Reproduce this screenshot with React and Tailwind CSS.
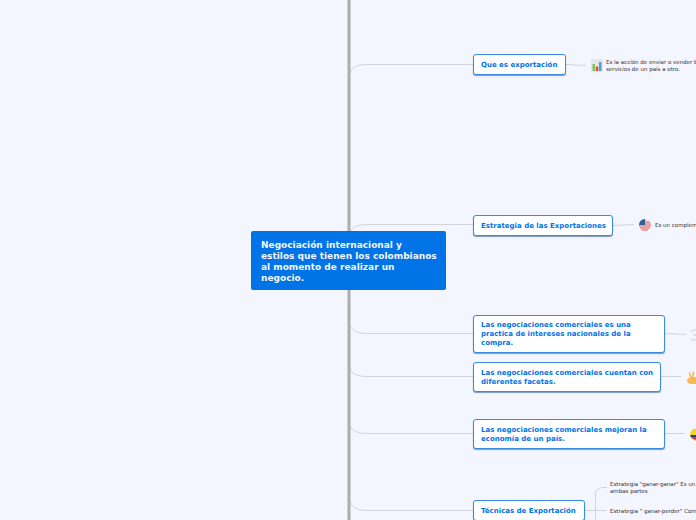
const nodes = [
  { pos: 'left-[473px] top-[54px] w-[93px] h-[21px]', text: 'Que es exportación' },
  { pos: 'left-[473px] top-[215px] w-[140px] h-[21px]', text: 'Estrategia de las Exportaciones' },
  { pos: 'left-[473px] top-[315px] w-[192px] h-[38px]', text: 'Las negociaciones comerciales es una practica de intereses nacionales de la compra.' },
  { pos: 'left-[473px] top-[362px] w-[188px] h-[30px]', text: 'Las negociaciones comerciales cuentan con diferentes facetas.' },
  { pos: 'left-[473px] top-[419px] w-[192px] h-[30px]', text: 'Las negociaciones comerciales mejoran la economía de un país.' },
  { pos: 'left-[473px] top-[500px] w-[112px] h-[21px]', text: 'Técnicas de Exportación' },
];

const notes = [
  { pos: 'left-[606px] top-[59px] w-[122px]', text: 'Es la acción de enviar o vender bienes y servicios de un país a otro.' },
  { pos: 'left-[655px] top-[222px] w-[120px]', text: 'Es un complemento' },
  { pos: 'left-[610px] top-[481px] w-[128px]', text: 'Estrategia "ganar-ganar" Es un acuerdo para ambas partes' },
  { pos: 'left-[610px] top-[508px] w-[128px]', text: 'Estrategia " ganar-perder" Como' },
];

const Connectors = () => (
  <svg className="absolute left-0 top-0" width="696" height="520" fill="none">
    {/* thin branches */}
    <g stroke="#d2d4da" strokeWidth="1">
      <path d="M350 74 Q351 64.5 367 64.5 H473" />
      <path d="M350 233 Q352 224.5 367 224.5 H473" />
      <path d="M350 325 Q352 333.5 367 333.5 H473" />
      <path d="M350 368 Q352 376.5 367 376.5 H473" />
      <path d="M350 425 Q352 433.5 367 433.5 H473" />
      <path d="M350 501 Q352 510.5 367 510.5 H473" />
      <path d="M566 64.5 L586 65.5" />
      <path d="M613 225.5 L634 224.5" />
      <path d="M665 333.5 L686 334.5" />
      <path d="M661 376.5 H681" />
      <path d="M665 433.5 H685" />
      <path d="M584 510.5 H606" />
      <path d="M595.5 520 V494 Q595.5 487.5 604 487.5 H607" />
    </g>
    {/* main trunk */}
    <path d="M349 0 V231 M349 290 V520" stroke="#adadad" strokeWidth="3" />
  </svg>
);

const BarsIcon = () => (
  <svg className="absolute left-[591px] top-[59px]" width="12" height="13" viewBox="0 0 12 13">
    <rect width="12" height="13" rx="1" fill="#e4e7ea" />
    <rect x="1.5" y="5" width="2.5" height="7" fill="#7cc25a" />
    <rect x="4.8" y="7.5" width="2.5" height="4.5" fill="#e8463c" />
    <rect x="8" y="3" width="2.5" height="9" fill="#4f9fd8" />
  </svg>
);

const UsFlag = () => (
  <svg className="absolute left-[639px] top-[219px]" width="12" height="12" viewBox="0 0 12 12">
    <circle cx="6" cy="6" r="6" fill="#f3dcdc" />
    <path d="M1 3h10M0 5h12M0 7h12M1 9h10M3 11h6" stroke="#df6b6f" strokeWidth="1" />
    <path d="M6 0A6 6 0 0 0 0 6H6Z" fill="#2f5f96" />
  </svg>
);

const Sketch = () => (
  <svg className="absolute left-[691px] top-[329px]" width="5" height="12" viewBox="0 0 5 12">
    <path d="M0 2L5 0.5M2 6H5M0 10L5 11.5" stroke="#dfe3e8" strokeWidth="2" />
  </svg>
);

const Hand = () => (
  <svg className="absolute left-[687px] top-[371px]" width="9" height="13" viewBox="0 0 9 13">
    <path d="M3 1L4.5 6L6 0.5L7.5 1L6.5 6L9 6V13H3Q0 12 0 8.5L1.5 7L3 7L1.8 1.5Z" fill="#f2bb58" />
  </svg>
);

const ColombiaFlag = () => (
  <svg className="absolute left-[690px] top-[428px]" width="12" height="13" viewBox="0 0 12 13">
    <circle cx="6" cy="6.5" r="6" fill="#f5d327" />
    <path d="M0.5 7H11.5V9H0.5Z" fill="#24408e" />
    <path d="M1 9H11A6 6 0 0 1 1 9Z" fill="#d8303a" />
  </svg>
);

export default function App() {
  return (
    <div className="relative w-[696px] h-[520px] overflow-hidden bg-[#f3f6fe] font-['DejaVu_Sans',sans-serif]">
      <Connectors />

      <div className="absolute left-[251px] top-[231px] w-[195px] h-[59px] rounded-[2px] bg-[#0073e6] pt-[9px] pl-[10px] pr-[8px] text-[9px] leading-[11px] font-bold text-[#f3f6fe]">
        Negociación internacional y estilos que tienen los colombianos al momento de realizar un negocio.
      </div>

      {nodes.map((n) => (
        <div
          key={n.text}
          className={`absolute ${n.pos} flex items-center rounded-[3px] border border-[#3a8ae0] bg-white pt-[1px] pl-[7px] pr-[5px] text-[7px] leading-[8.8px] font-bold text-[#0073e6] shadow-[0_1px_1px_rgba(40,90,150,0.6)]`}
        >
          <span>{n.text}</span>
        </div>
      ))}

      {notes.map((n) => (
        <div key={n.text} className={`absolute ${n.pos} text-[5.5px] leading-[7px] text-[#333333]`}>
          {n.text}
        </div>
      ))}

      <BarsIcon />
      <UsFlag />
      <Sketch />
      <Hand />
      <ColombiaFlag />
    </div>
  );
}
